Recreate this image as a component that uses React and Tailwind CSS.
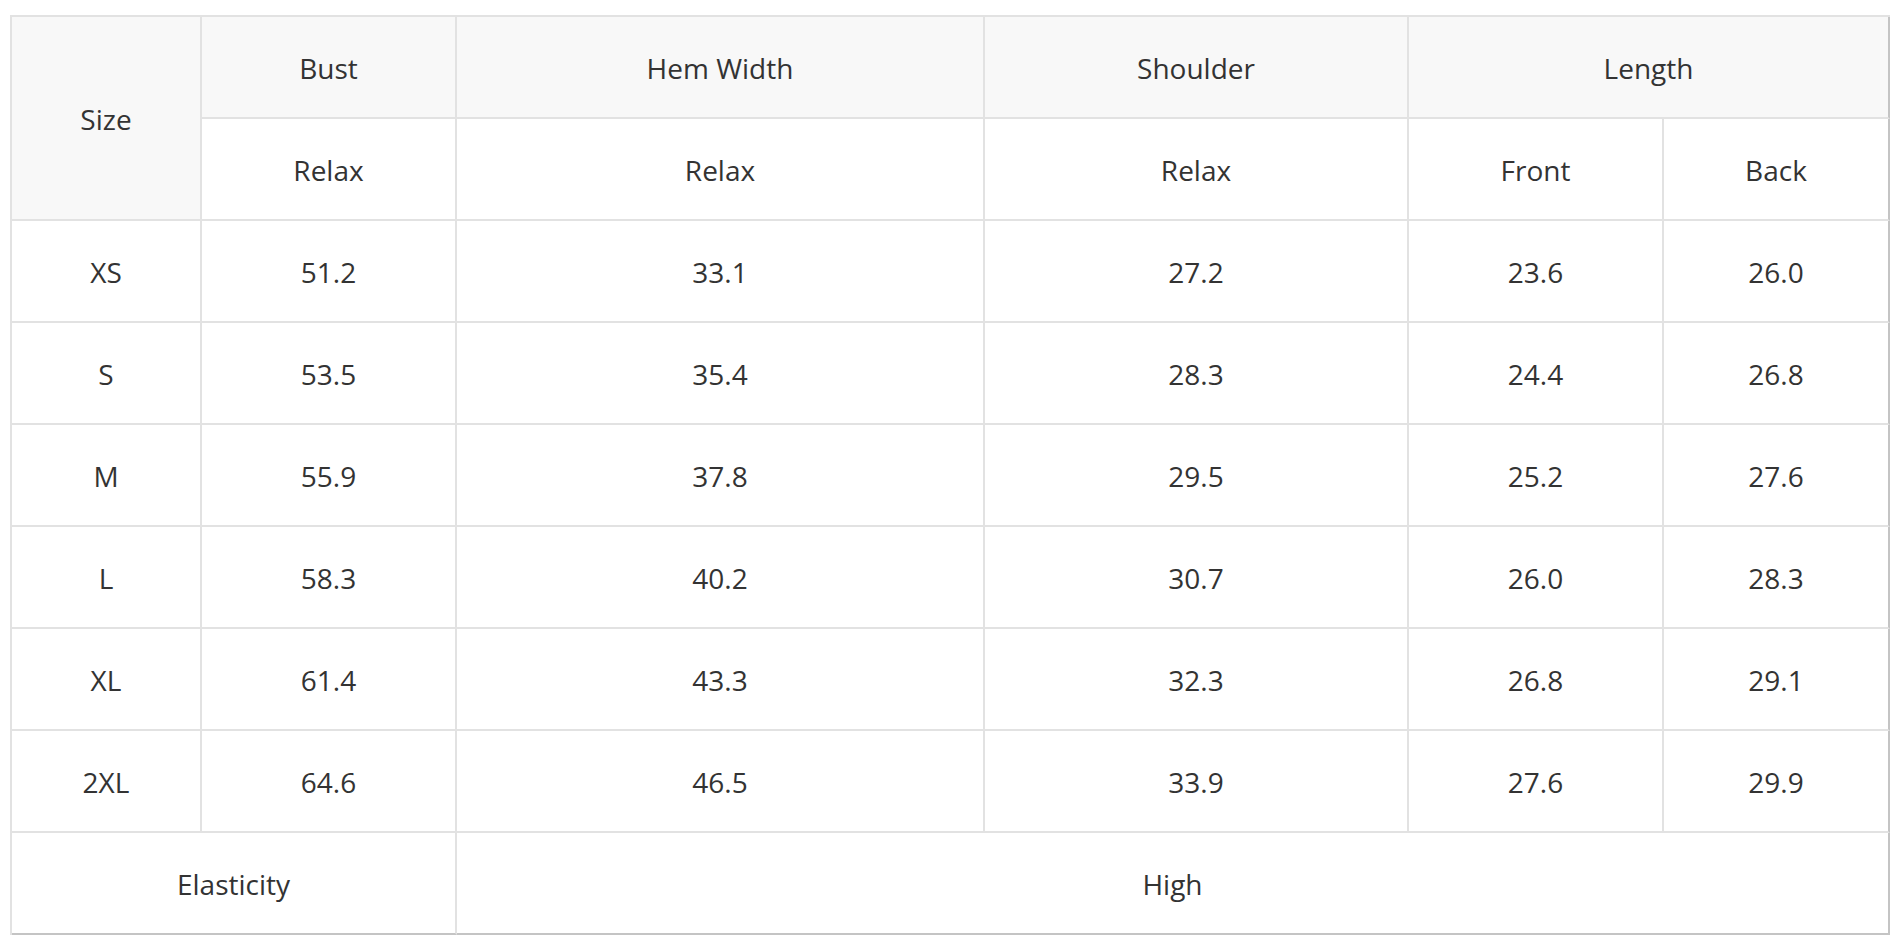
const HEAD = 'bg-[#f8f8f8]'

const ROWS = [
  ['XS', '51.2', '33.1', '27.2', '23.6', '26.0'],
  ['S', '53.5', '35.4', '28.3', '24.4', '26.8'],
  ['M', '55.9', '37.8', '29.5', '25.2', '27.6'],
  ['L', '58.3', '40.2', '30.7', '26.0', '28.3'],
  ['XL', '61.4', '43.3', '32.3', '26.8', '29.1'],
  ['2XL', '64.6', '46.5', '33.9', '27.6', '29.9'],
]

function Cell({ children, className = '' }) {
  return (
    <div className={`flex items-center justify-center pt-[2px] border-r-2 border-b-2 border-[#e2e2e2] ${className}`}>
      {children}
    </div>
  )
}

export default function App() {
  return (
    <div className="min-h-screen bg-white pt-[15px] pl-[10px]">
      <div
        className="grid w-[1880px] grid-cols-[190px_255px_528px_424px_255px_226px] auto-rows-[102px] border-l-2 border-t-2 border-[#e2e2e2] text-[28px] text-[#333]"
        style={{ fontFamily: '"Open Sans", "Noto Sans", sans-serif' }}
      >
        {/* Header */}
        <Cell className={`row-span-2 ${HEAD}`}>Size</Cell>
        <Cell className={HEAD}>Bust</Cell>
        <Cell className={HEAD}>Hem Width</Cell>
        <Cell className={HEAD}>Shoulder</Cell>
        <Cell className={`col-span-2 ${HEAD} border-r-[#c4c4c4]`}>Length</Cell>

        <Cell>Relax</Cell>
        <Cell>Relax</Cell>
        <Cell>Relax</Cell>
        <Cell>Front</Cell>
        <Cell className="border-r-[#c4c4c4]">Back</Cell>

        {/* Body */}
        {ROWS.map((row) =>
          row.map((v, i) => (
            <Cell key={row[0] + i} className={i === 5 ? 'border-r-[#c4c4c4]' : ''}>
              {v}
            </Cell>
          ))
        )}

        <Cell className="col-span-2 border-b-[#c4c4c4]">Elasticity</Cell>
        <Cell className="col-span-4 border-b-[#c4c4c4] border-r-[#c4c4c4]">High</Cell>
      </div>
    </div>
  )
}
